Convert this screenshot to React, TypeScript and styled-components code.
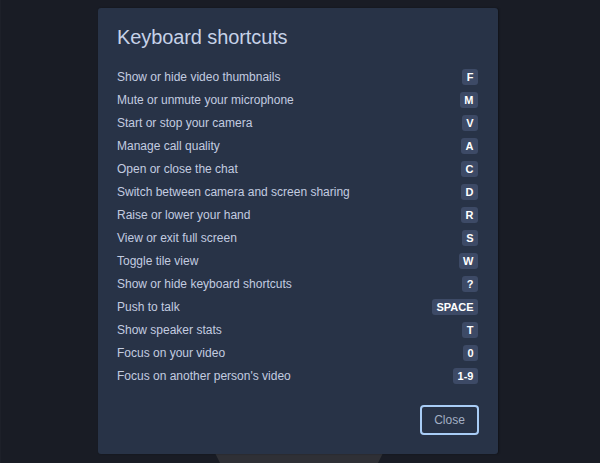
import React from "react";
import styled, { createGlobalStyle } from "styled-components";

const Global = createGlobalStyle`
  html, body { margin: 0; padding: 0; background: #191c25; }
  body { font-family: "Liberation Sans", Arial, sans-serif; }
`;

const Stage = styled.div`
  position: relative;
  width: 600px;
  height: 463px;
  overflow: hidden;
  background: #191c25;
  border-left: 1px solid #1d2029;
  box-sizing: border-box;
  display: flex;
  flex-direction: column;
  justify-content: flex-end;
  align-items: center;
`;

const Toolbar = styled.div`
  width: 168px;
  height: 10px;
  margin-left: -3px;
  background: #2f3036;
  clip-path: polygon(0 0, 100% 0, calc(100% - 5px) 100%, 5px 100%);
  display: flex;
  justify-content: center;
`;

const ToolbarLine = styled.div`
  width: 111px;
  height: 1px;
  background: #3e3f48;
`;

const Overlay = styled.div`
  position: absolute;
  inset: 0;
  padding: 8px 0 0 97px;
`;

const Modal = styled.div`
  width: 400px;
  height: 446px;
  box-sizing: border-box;
  background: #283347;
  border-radius: 3px;
  box-shadow: 1px 0 2px rgba(0, 0, 0, 0.35);
  padding: 0 20px 19px 19px;
  display: flex;
  flex-direction: column;
`;

const Title = styled.h2`
  margin: 0;
  height: 57px;
  display: flex;
  align-items: center;
  padding-top: 1px;
  box-sizing: border-box;
  font-size: 20px;
  font-weight: 400;
  color: #c6d2e8;
  letter-spacing: -0.1px;
`;

const List = styled.ul`
  list-style: none;
  margin: 0;
  padding: 0;
  display: flex;
  flex-direction: column;
`;

const Row = styled.li`
  height: 23px;
  display: flex;
  align-items: center;
  justify-content: space-between;
  font-size: 12px;
  color: #c3cce0;
`;

const Key = styled.span`
  background: #3d4a66;
  color: #ffffff;
  font-weight: 700;
  font-size: 11px;
  line-height: 16px;
  height: 16px;
  min-width: 15px;
  box-sizing: border-box;
  padding: 0 4.5px;
  text-align: center;
  border-radius: 3px;
`;

const Footer = styled.div`
  margin-top: auto;
  display: flex;
  justify-content: flex-end;
  margin-right: -1px;
`;

const CloseButton = styled.button`
  width: 59px;
  height: 30px;
  box-sizing: border-box;
  background: transparent;
  border: 2px solid #a9cdf6;
  border-radius: 4px;
  color: #a3afc4;
  font-family: "Liberation Sans", Arial, sans-serif;
  font-size: 12px;
  padding: 0;
`;

const shortcuts: [string, string][] = [
  ["Show or hide video thumbnails", "F"],
  ["Mute or unmute your microphone", "M"],
  ["Start or stop your camera", "V"],
  ["Manage call quality", "A"],
  ["Open or close the chat", "C"],
  ["Switch between camera and screen sharing", "D"],
  ["Raise or lower your hand", "R"],
  ["View or exit full screen", "S"],
  ["Toggle tile view", "W"],
  ["Show or hide keyboard shortcuts", "?"],
  ["Push to talk", "SPACE"],
  ["Show speaker stats", "T"],
  ["Focus on your video", "0"],
  ["Focus on another person's video", "1-9"],
];

export default function App() {
  return (
    <>
      <Global />
      <Stage>
        <Toolbar>
          <ToolbarLine />
        </Toolbar>
        <Overlay>
          <Modal>
            <Title>Keyboard shortcuts</Title>
            <List>
              {shortcuts.map(([label, key]) => (
                <Row key={label}>
                  <span>{label}</span>
                  <Key>{key}</Key>
                </Row>
              ))}
            </List>
            <Footer>
              <CloseButton>Close</CloseButton>
            </Footer>
          </Modal>
        </Overlay>
      </Stage>
    </>
  );
}
